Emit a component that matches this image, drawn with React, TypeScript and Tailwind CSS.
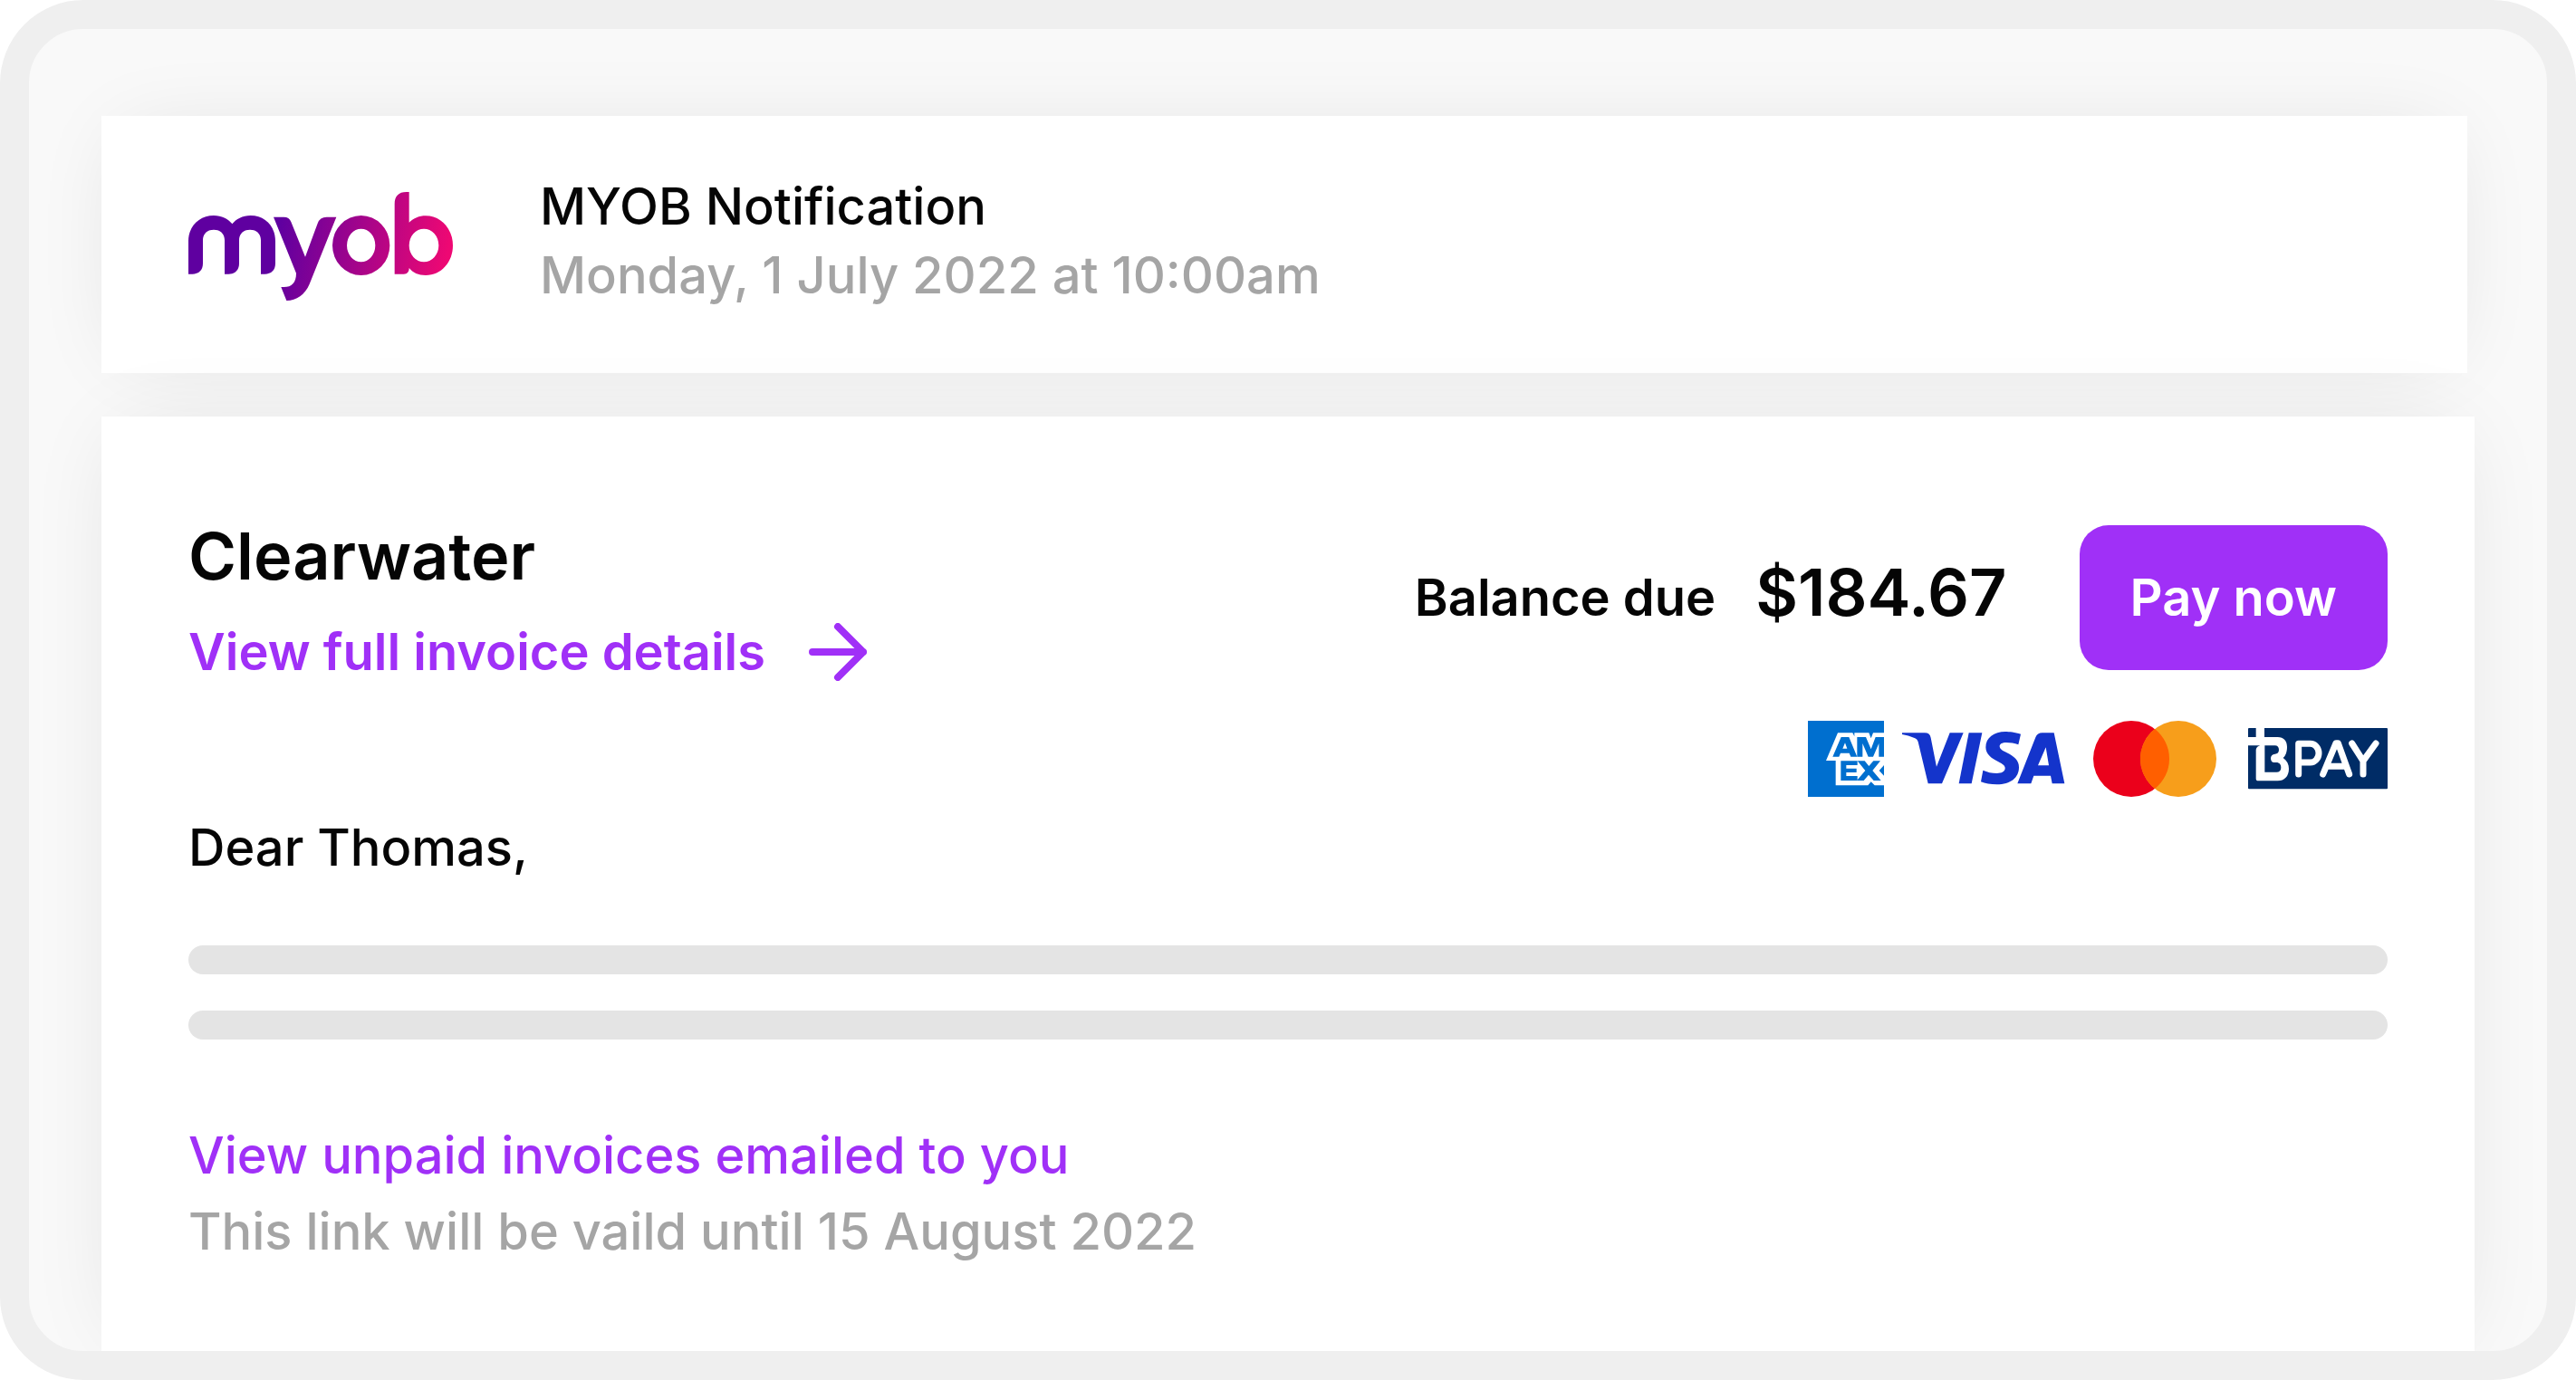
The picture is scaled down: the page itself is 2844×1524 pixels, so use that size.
import { useId } from "react";
import type { ReactNode } from "react";

function MyobLogo() {
  const gradientId = useId();
  return (
    <svg
      viewBox="54 66 876 360"
      className="mt-[22px] h-[120px] w-[292px] shrink-0"
      role="img"
      aria-label="myob"
    >
      <defs>
        <linearGradient
          id={gradientId}
          gradientUnits="userSpaceOnUse"
          x1="350"
          y1="200"
          x2="910"
          y2="290"
        >
          <stop offset="0" stopColor="#5f00a0" />
          <stop offset="1" stopColor="#ee0873" />
        </linearGradient>
      </defs>
      <g fill={`url(#${gradientId})`} fillRule="evenodd">
        <path d="M54 338V229C54 180 90 144 138 144C165 144 186 156 199 172C212 156 233 144 260 144C308 144 342 180 342 229V303C342 325 328 338 307 338H294V226C294 205 280 191 258 191C236 191 222 205 222 226V303C222 325 208 338 187 338H174V226C174 205 160 191 138 191C116 191 102 205 102 226V303C102 325 88 338 67 338Z" />
        <path d="M336 149H370Q388 149 394 165L441 281L482 170Q489 149 512 149H544L455 371C440 406 412 426 379 426L361 381H370C396 381 411 366 411 335Z" />
        <path d="M626 144a95 99 0 0 1 0 198a95 99 0 0 1 0-198ZM626 188a47 55 0 0 0 0 110a47 55 0 0 0 0-110Z" />
        <path d="M737 338V106C737 80 750 66 776 66H785V167C800 153 818 145 840 145C892 145 930 190 930 243C930 298 892 342 840 342C815 342 798 334 785 318C785 330 780 338 767 338ZM834 188a49 55 0 0 0 0 110a49 55 0 0 0 0-110Z" />
      </g>
    </svg>
  );
}

function AmexLogo() {
  return (
    <svg
      viewBox="48 48 252 252"
      className="size-[84px]"
      role="img"
      aria-label="American Express"
    >
      <path fill="#006fcf" d="M48 48H300V300H48Z" />
      <path
        fill="#fff"
        d="M108 180L147 88H196L202 100V88H250L257 106L264 88H300V262H269L257 250L247 262H140V180Z"
      />
      <g fill="#006fcf" fillRule="evenodd">
        <path d="M130 167L158 102H184L211 167H190L185 155H156L151 167ZM163 140H178L171 121Z" />
        <path d="M211 167V102H240L257 142L272 102H300V167H283V123L264 167H248L229 123V167Z" />
        <path d="M157 181H212V195H175V206H209V219H175V231H212V246H157Z" />
        <path d="M212 181H236L250 198L265 181H288L262 213L290 246H266L249 227L233 246H210L238 213Z" />
        <path d="M300 195L284 213L300 230Z" />
      </g>
    </svg>
  );
}

function VisaLogo() {
  return (
    <svg
      viewBox="361 48 540 252"
      className="h-[84px] w-[180px]"
      role="img"
      aria-label="Visa"
    >
      <g fill="#1434cb" fillRule="evenodd">
        <path d="M361 88H436Q453 88 456 104L475 200L519 88H564L493 256H447L414 118Q412 108 400 104Q382 96 361 93Z" />
        <path d="M582 88H626L591 256H549Z" />
        <path d="M754 92C735 86 715 84 703 84C665 84 638 104 638 136C638 160 658 173 680 184C695 192 702 197 702 205C702 217 690 222 675 222C658 222 643 218 629 212L622 250C635 255 655 259 675 259C720 259 748 237 748 202C748 180 733 166 708 154C692 146 684 141 684 132C684 125 692 120 706 120C720 120 733 122 746 127Z" />
        <path d="M825 88H864L899 256H858L853 230H797L788 256H743L803 103Q809 88 825 88ZM811 196H847L837 136Z" />
      </g>
    </svg>
  );
}

function MastercardLogo() {
  return (
    <svg
      viewBox="30 48 486 252"
      className="h-[84px] w-[162px]"
      role="img"
      aria-label="Mastercard"
    >
      <circle cx="189" cy="174" r="126" fill="#eb001b" />
      <circle cx="345" cy="174" r="126" fill="#f79e1b" />
      <path fill="#ff5f00" d="M267 75a126 126 0 0 1 0 198a126 126 0 0 1 0-198Z" />
    </svg>
  );
}

function BpayLogo() {
  return (
    <svg
      viewBox="582 48 462 252"
      className="h-[84px] w-[154px]"
      role="img"
      aria-label="BPAY"
    >
      <rect x="582" y="72" width="462" height="202" rx="3" fill="#002c66" />
      <path
        fill="#fff"
        d="M608 72H636V102H680C700 102 711 115 711 134C711 152 706 163 698 171C711 180 717 192 717 207C717 232 702 247 680 247H616Q608 247 608 239V144Q609 134 622 130H582V102H608Z"
      />
      <path
        fill="#002c66"
        d="M637 130H671C679 130 684 136 684 144C684 153 679 158 671 158Q657 160 657 172Q657 186 668 186H675C686 186 691 193 691 203C691 213 685 218 676 218H637Z"
      />
      <g
        fill="none"
        stroke="#fff"
        strokeWidth="21"
        strokeLinecap="round"
        strokeLinejoin="round"
      >
        <path d="M749 225V124H788A28 31 0 0 1 788 186H749" />
        <path d="M830 225L873 122H880L917 225M846 199H900" />
        <path d="M926 123L963 181L1005 123M963 181V225" />
      </g>
    </svg>
  );
}

function ArrowIcon() {
  return (
    <svg
      viewBox="0 0 64 64"
      className="size-16"
      fill="none"
      stroke="currentColor"
      strokeWidth="8"
      strokeLinecap="round"
      strokeLinejoin="round"
      aria-hidden
    >
      <path d="M4 32H60M32 4L60 32L32 60" />
    </svg>
  );
}

function Card({ className, children }: { className: string; children: ReactNode }) {
  return (
    <section
      className={`bg-white px-24 shadow-[0_0_96px_-24px_rgba(0,0,0,0.11)] ${className}`}
    >
      {children}
    </section>
  );
}

export default function App() {
  return (
    <div className="min-h-screen bg-white font-['Inter',sans-serif] text-[56px] leading-[76px] font-medium text-[#050505]">
      <div className="flex min-h-screen flex-col overflow-hidden rounded-[92px] border-[32px] border-[#efefef] bg-[#f9f9f9] pt-24 pr-20 pl-20">
        <header className="mr-2">
          <Card className="flex gap-24 pt-[62px] pb-[70px]">
            <MyobLogo />
            <div>
              <p>MYOB Notification</p>
              <p className="text-[#a5a5a5]">Monday, 1 July 2022 at 10:00am</p>
            </div>
          </Card>
        </header>

        <main className="mt-12 flex grow flex-col">
          <Card className="grow pt-[110px]">
            <div className="flex items-start justify-between">
              <div>
                <h1 className="text-[72px] leading-[88px] font-semibold">Clearwater</h1>
                <a
                  href="#invoice"
                  className="mt-6 flex items-center gap-12 font-semibold text-[#a030f7]"
                >
                  View full invoice details
                  <ArrowIcon />
                </a>
              </div>

              <div className="mt-[10px] flex flex-col items-end">
                <div className="flex items-baseline">
                  <span className="font-semibold">Balance due</span>
                  <span className="ml-11 text-[72px] leading-[88px] font-semibold">
                    $184.67
                  </span>
                  <button
                    type="button"
                    className="ml-20 h-40 rounded-[32px] bg-[#a030f7] px-14 font-semibold text-white"
                  >
                    Pay now
                  </button>
                </div>
                <div className="mt-14 flex gap-5">
                  <AmexLogo />
                  <VisaLogo />
                  <MastercardLogo />
                  <BpayLogo />
                </div>
              </div>
            </div>

            <p className="mt-[18px]">Dear Thomas,</p>
            <div className="mt-[70px] h-8 rounded-full bg-[#e4e4e4]" />
            <div className="mt-10 h-8 rounded-full bg-[#e4e4e4]" />

            <p className="mt-[86px] leading-[84px]">
              <a href="#unpaid" className="text-[#a030f7]">
                View unpaid invoices emailed to you
              </a>
            </p>
            <p className="leading-[84px] text-[#a5a5a5]">
              This link will be vaild until 15 August 2022
            </p>
          </Card>
        </main>
      </div>
    </div>
  );
}
